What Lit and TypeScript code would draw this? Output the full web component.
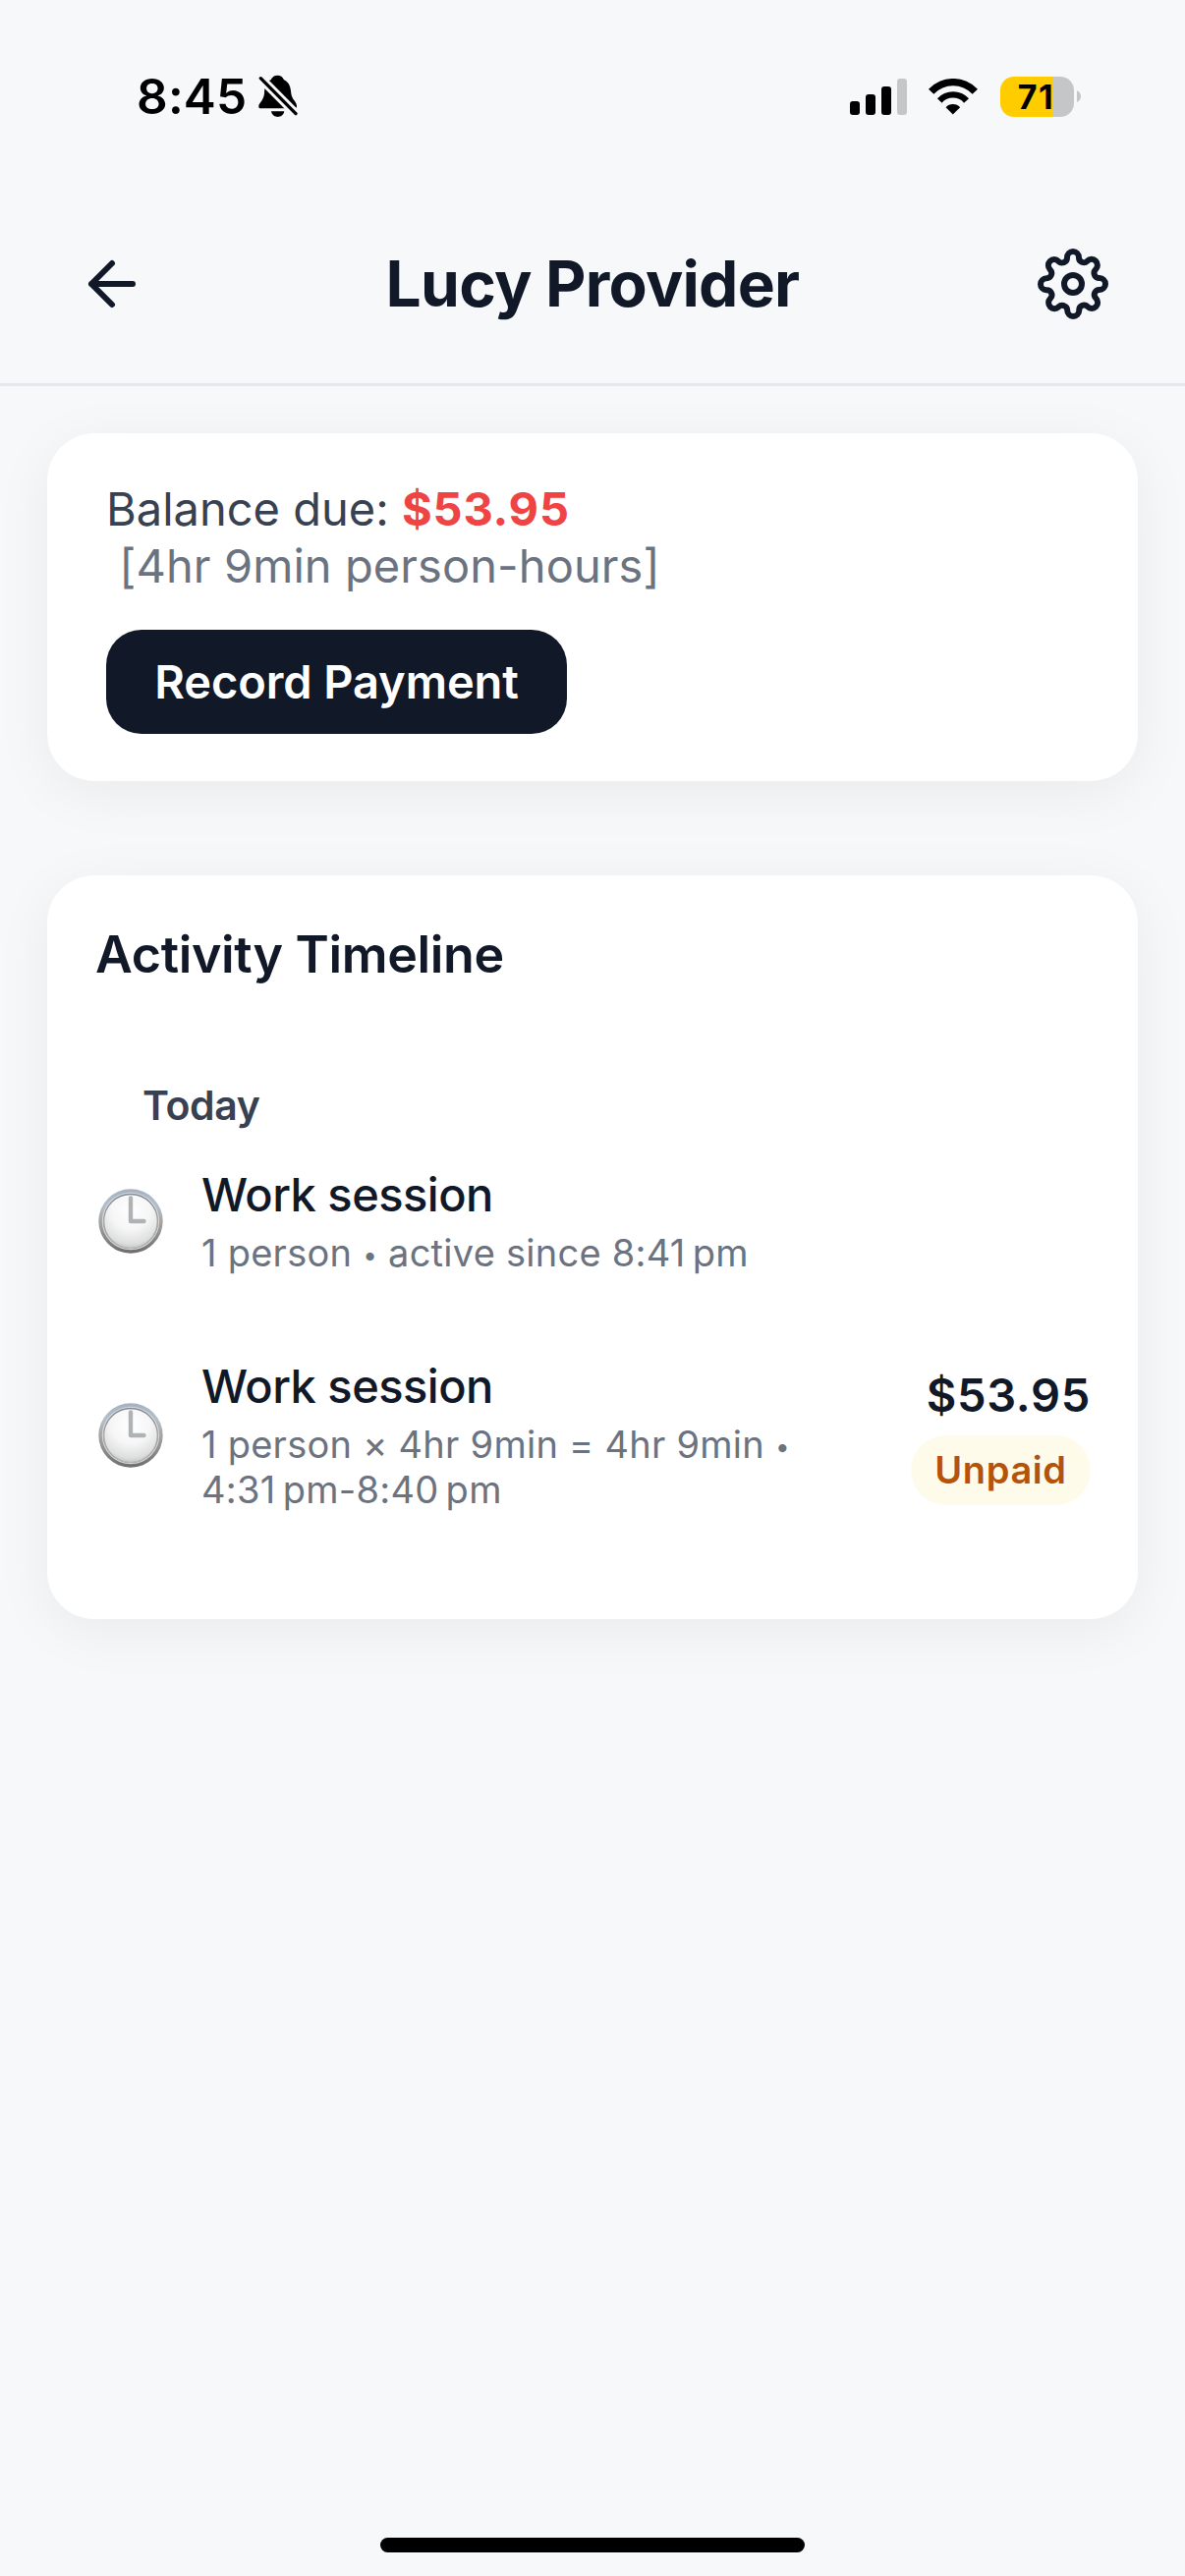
import { LitElement, html, css, svg, nothing } from "lit";
import { customElement, property } from "lit/decorators.js";

interface Session {
  title: string;
  detail: string[];
  amount?: string;
  status?: string;
}

const sessions: Session[] = [
  { title: "Work session", detail: ["1 person", "active since 8:41\u202fpm"] },
  {
    title: "Work session",
    detail: ["1 person × 4hr 9min = 4hr 9min", "4:31\u202fpm-8:40\u202fpm"],
    amount: "$53.95",
    status: "Unpaid",
  },
];

@customElement("status-bar")
class StatusBar extends LitElement {
  static styles = css`
    :host {
      display: flex;
      align-items: center;
      box-sizing: border-box;
      height: 188px;
      padding: 8px 106px 0 139px;
      color: #000;
    }
    svg {
      display: block;
      flex: none;
    }
    .time {
      font-size: 49.5px;
      font-weight: 600;
      line-height: 60px;
      letter-spacing: 0.2px;
    }
    .bell {
      margin-left: 12px;
    }
    .system {
      display: flex;
      align-items: center;
      margin-left: auto;
    }
    .wifi {
      margin-left: 22px;
    }
    .battery {
      display: flex;
      align-items: center;
      justify-content: center;
      box-sizing: border-box;
      width: 75px;
      height: 41px;
      margin-left: 23px;
      padding-right: 2px;
      border-radius: 14px;
      background: linear-gradient(to right, #ffcc00 71%, #c5c6c8 71%);
      font-size: 34px;
      font-weight: 700;
      line-height: 41px;
      letter-spacing: 1.5px;
    }
    .nub {
      margin-left: 3px;
    }
  `;

  render() {
    const bars = [126, 105, 81, 57];
    return html`
      <span class="time">8:45</span>
      <svg class="bell" width="40" height="44" viewBox="430 50 120 132">
        <path
          d="M437 153Q430 153 431 145C432 137 446 128 448 108C449 85 452 72 468 66C472 56 480 52 488 52C497 52 504 56 508 66C525 74 528 88 530 108C532 126 546 132 547 145Q547 153 540 153Z"
        />
        <path d="M469 162H509C507 174 498 179 489 179S471 174 469 162Z" />
        <path d="M425 49L556 181" stroke="#f7f8fa" stroke-width="27" />
        <path d="M437 61L544 169" stroke="#000" stroke-width="10" stroke-linecap="round" />
      </svg>
      <div class="system">
        <svg width="58" height="37" viewBox="75 57 174 111">
          ${bars.map(
            (y, i) => svg`<rect x=${75 + i * 48} y=${y} width="30" height=${168 - y} rx="9"
              fill=${i === 3 ? "#c5c6c8" : "#000"} />`,
          )}
        </svg>
        <svg class="wifi" width="50" height="37" viewBox="316 57 151 111">
          <path d="M316 89A104 104 0 0 1 467 89L451 104A82 82 0 0 0 332 104Z" />
          <path d="M343 118A65 65 0 0 1 440 118L425 131A45 45 0 0 0 357 131Z" />
          <path d="M369 145A30 30 0 0 1 413 145L391 167Z" />
        </svg>
        <div class="battery">71</div>
        <svg class="nub" width="4" height="12" viewBox="0 0 4 12">
          <path d="M0 0Q4 2 4 6T0 12Z" fill="#c5c6c8" />
        </svg>
      </div>
    `;
  }
}

@customElement("page-header")
class PageHeader extends LitElement {
  static styles = css`
    :host {
      display: flex;
      align-items: center;
      justify-content: space-between;
      box-sizing: border-box;
      height: 205px;
      padding: 0 78px;
      border-bottom: 3px solid #e5e7eb;
      color: #111827;
    }
    svg {
      display: block;
      fill: none;
      stroke: currentColor;
      stroke-width: 2;
      stroke-linecap: round;
      stroke-linejoin: round;
    }
    h1 {
      margin: 0;
      font-size: 64px;
      font-weight: 700;
      line-height: 80px;
      letter-spacing: -0.75px;
    }
  `;

  render() {
    return html`
      <svg width="72" height="72" viewBox="0 0 24 24">
        <path d="M19 12H5M12 19L5 12L12 5" />
      </svg>
      <h1>Lucy Provider</h1>
      <svg width="72" height="72" viewBox="0 0 24 24">
        <circle cx="12" cy="12" r="3" />
        <path
          d="M19.4 15a1.65 1.65 0 0 0 .33 1.82l.06.06a2 2 0 0 1 0 2.83 2 2 0 0 1-2.83 0l-.06-.06a1.65 1.65 0 0 0-1.82-.33 1.65 1.65 0 0 0-1 1.51V21a2 2 0 0 1-2 2 2 2 0 0 1-2-2v-.09A1.65 1.65 0 0 0 9 19.4a1.65 1.65 0 0 0-1.82.33l-.06.06a2 2 0 0 1-2.83 0 2 2 0 0 1 0-2.83l.06-.06a1.65 1.65 0 0 0 .33-1.82 1.65 1.65 0 0 0-1.51-1H3a2 2 0 0 1-2-2 2 2 0 0 1 2-2h.09A1.65 1.65 0 0 0 4.6 9a1.65 1.65 0 0 0-.33-1.82l-.06-.06a2 2 0 0 1 0-2.83 2 2 0 0 1 2.83 0l.06.06a1.65 1.65 0 0 0 1.82.33H9a1.65 1.65 0 0 0 1-1.51V3a2 2 0 0 1 2-2 2 2 0 0 1 2 2v.09a1.65 1.65 0 0 0 1 1.51 1.65 1.65 0 0 0 1.82-.33l.06-.06a2 2 0 0 1 2.83 0 2 2 0 0 1 0 2.83l-.06.06a1.65 1.65 0 0 0-.33 1.82V9a1.65 1.65 0 0 0 1.51 1H21a2 2 0 0 1 2 2 2 2 0 0 1-2 2h-.09a1.65 1.65 0 0 0-1.51 1z"
        />
      </svg>
    `;
  }
}

@customElement("session-row")
class SessionRow extends LitElement {
  @property({ attribute: false }) session!: Session;

  static styles = css`
    :host {
      display: flex;
      align-items: center;
      color: #111827;
    }
    .clock {
      display: block;
      flex: none;
      margin-right: 39px;
    }
    .text {
      flex: 1;
      min-width: 0;
      max-width: 620px;
    }
    .title {
      font-size: 47px;
      font-weight: 500;
      line-height: 57px;
      letter-spacing: -0.51px;
    }
    .detail {
      margin-top: 8px;
      color: #6b7280;
      font-size: 38px;
      line-height: 46px;
      letter-spacing: 0.26px;
    }
    .dot {
      font-size: 26px;
      line-height: 0;
      vertical-align: 2px;
    }
    .side {
      display: flex;
      flex-direction: column;
      align-items: flex-end;
      gap: 13px;
      margin-left: auto;
      padding-top: 2px;
    }
    .amount {
      font-size: 47px;
      font-weight: 600;
      line-height: 57px;
      letter-spacing: 0.69px;
    }
    .badge {
      box-sizing: border-box;
      width: 183px;
      height: 71px;
      border-radius: 36px;
      background: #fffbeb;
      color: #b45309;
      font-size: 38px;
      font-weight: 600;
      line-height: 71px;
      letter-spacing: 0.6px;
      text-align: center;
    }
  `;

  render() {
    const { title, detail, amount, status } = this.session;
    return html`
      <svg class="clock" width="66" height="66" viewBox="0 0 66 66">
        <defs>
          <linearGradient id="rim" x1="0" y1="0" x2="0" y2="1">
            <stop offset="0" stop-color="#a3b1c2" />
            <stop offset="0.25" stop-color="#b4bfcb" />
            <stop offset="0.5" stop-color="#a8a5a2" />
            <stop offset="0.75" stop-color="#8b8a89" />
            <stop offset="1" stop-color="#6d6c6b" />
          </linearGradient>
          <linearGradient id="bevel" x1="0" y1="0" x2="0" y2="1">
            <stop offset="0" stop-color="#79838e" />
            <stop offset="0.5" stop-color="#a3a3a3" />
            <stop offset="1" stop-color="#b9b9b9" />
          </linearGradient>
          <radialGradient id="face" cx="0.5" cy="0.3" r="0.72">
            <stop offset="0" stop-color="#ffffff" />
            <stop offset="0.5" stop-color="#f6f6f6" />
            <stop offset="0.85" stop-color="#dedfdf" />
            <stop offset="1" stop-color="#c3c4c4" />
          </radialGradient>
        </defs>
        <circle cx="33" cy="33" r="32.7" fill="url(#rim)" />
        <circle cx="33" cy="33" r="28.6" fill="none" stroke="#d3d6d9" stroke-width="1.2" />
        <circle cx="33" cy="33" r="27.3" fill="url(#face)" stroke="url(#bevel)" stroke-width="1.2" />
        <path
          d="M33 9.5V33H46.5"
          fill="none"
          stroke="#b0b3b5"
          stroke-width="4.4"
          stroke-linecap="round"
          stroke-linejoin="round"
        />
      </svg>
      <div class="text">
        <div class="title">${title}</div>
        <div class="detail">${detail[0]} <span class="dot">•</span> ${detail[1]}</div>
      </div>
      ${amount
        ? html`<div class="side">
            <div class="amount">${amount}</div>
            <div class="badge">${status}</div>
          </div>`
        : nothing}
    `;
  }
}

@customElement("app-root")
class AppRoot extends LitElement {
  static styles = css`
    :host {
      display: flex;
      flex-direction: column;
      box-sizing: border-box;
      width: 1206px;
      height: 2622px;
      background: #f7f8fa;
      color: #111827;
      font-family: Inter, "Liberation Sans", sans-serif;
    }
    .content {
      display: flex;
      flex-direction: column;
      gap: 96px;
      padding: 48px 48px 0;
    }
    .card {
      border-radius: 48px;
      background: #fff;
      box-shadow: 0 12px 60px rgba(0, 0, 0, 0.06);
    }
    .balance {
      padding: 48px 60px;
    }
    .summary {
      margin: 0;
      color: #374151;
      font-size: 47px;
      line-height: 58px;
    }
    .due {
      color: #ef4444;
      font-weight: 700;
      letter-spacing: 0.85px;
    }
    .hours {
      display: block;
      color: #6b7280;
      letter-spacing: 0.08px;
    }
    .pay {
      display: block;
      width: 469px;
      height: 106px;
      margin: 36px 0 0;
      padding: 0;
      border: 0;
      border-radius: 36px;
      background: #111827;
      color: #fff;
      font: 600 47px/106px Inter, "Liberation Sans", sans-serif;
      letter-spacing: -0.1px;
    }
    .timeline {
      padding: 49px 48px 109px 49px;
    }
    h2 {
      margin: 0;
      font-size: 52px;
      font-weight: 600;
      line-height: 64px;
      letter-spacing: -0.35px;
    }
    h3 {
      margin: 96px 0 37px;
      padding-left: 48px;
      color: #374151;
      font-size: 41px;
      font-weight: 600;
      line-height: 50px;
      letter-spacing: -0.4px;
    }
    .rows {
      display: flex;
      flex-direction: column;
      gap: 84px;
      padding-left: 3px;
    }
    .home {
      width: 432px;
      height: 15px;
      margin: auto auto 24px;
      border-radius: 8px;
      background: #000;
    }
  `;

  render() {
    return html`
      <status-bar></status-bar>
      <page-header></page-header>
      <main class="content">
        <section class="card balance">
          <p class="summary">
            Balance due: <span class="due">$53.95</span>
            <span class="hours">&nbsp;[4hr 9min person-hours]</span>
          </p>
          <button class="pay">Record Payment</button>
        </section>
        <section class="card timeline">
          <h2>Activity Timeline</h2>
          <h3>Today</h3>
          <div class="rows">
            ${sessions.map((s) => html`<session-row .session=${s}></session-row>`)}
          </div>
        </section>
      </main>
      <div class="home"></div>
    `;
  }
}
